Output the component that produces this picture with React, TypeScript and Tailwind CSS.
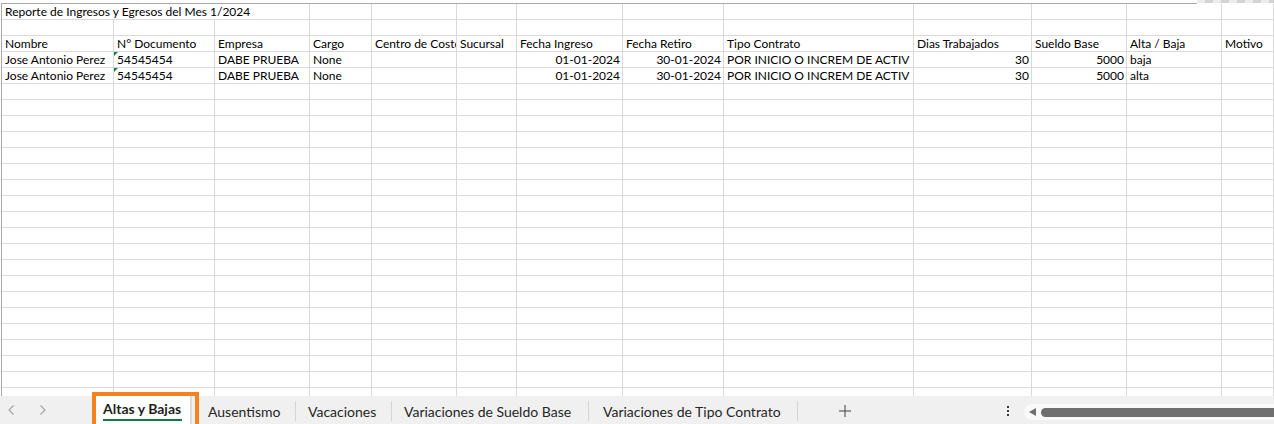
const COLS = [
  "w-[112px]",
  "w-[101px]",
  "w-[95px]",
  "w-[62px]",
  "w-[85px]",
  "w-[60px]",
  "w-[106px]",
  "w-[101px]",
  "w-[190px]",
  "w-[118px]",
  "w-[95px]",
  "w-[95px]",
  "flex-1",
];

type Cell = { t?: string; right?: boolean; flag?: boolean };

const header: Cell[] = [
  "Nombre",
  "N° Documento",
  "Empresa",
  "Cargo",
  "Centro de Costo",
  "Sucursal",
  "Fecha Ingreso",
  "Fecha Retiro",
  "Tipo Contrato",
  "Dias Trabajados",
  "Sueldo Base",
  "Alta / Baja",
  "Motivo",
].map((t) => ({ t }));

function dataRow(tipo: string): Cell[] {
  return [
    { t: "Jose Antonio Perez" },
    { t: "54545454", flag: true },
    { t: "DABE PRUEBA" },
    { t: "None" },
    {},
    {},
    { t: "01-01-2024", right: true },
    { t: "30-01-2024", right: true },
    { t: "POR INICIO O INCREM DE ACTIV" },
    { t: "30", right: true },
    { t: "5000", right: true },
    { t: tipo },
    {},
  ];
}

const rows: Cell[][] = [[], header, dataRow("baja"), dataRow("alta")];
while (rows.length < 24) rows.push([]);

function Row({ cells }: { cells: Cell[] }) {
  return (
    <div className="flex h-[16px] shrink-0 border-b border-[#dadada]">
      {COLS.map((w, i) => {
        const c = cells[i] || {};
        return (
          <div
            key={i}
            className={`${w} relative shrink-0 overflow-hidden whitespace-nowrap border-r border-[#dadada] pl-[3px] leading-[15px] ${
              c.right ? "pr-[2px] text-right" : "pr-[1px]"
            }`}
          >
            {c.flag && (
              <span className="absolute left-0 top-0 h-0 w-0 border-r-[4px] border-t-[4px] border-r-transparent border-t-[#1e7b3a]" />
            )}
            {c.t}
          </div>
        );
      })}
    </div>
  );
}

function TitleRow() {
  return (
    <div className="flex h-[16px] shrink-0 border-b border-[#dadada]">
      {COLS.map((w, i) => (
        <div
          key={i}
          className={`${w} shrink-0 whitespace-nowrap pl-[3px] leading-[15px] ${
            i < 2 ? "" : "border-r border-[#dadada]"
          } ${i === 0 ? "overflow-visible" : "overflow-hidden"}`}
        >
          {i === 0 ? "Reporte de Ingresos y Egresos del Mes 1/2024" : ""}
        </div>
      ))}
    </div>
  );
}

function Sep() {
  return <div className="mt-[5px] h-[20px] w-px shrink-0 bg-[#d4d4d4]" />;
}

export default function App() {
  return (
    <div className="relative h-[424px] w-[1274px] overflow-hidden bg-white font-['Lato',sans-serif] text-[12px] text-black">
      {/* top edge */}
      <div className="flex h-[3px]">
        <div className="flex-1" />
        <div className="flex w-[77px]">
          {Array.from({ length: 10 }).map((_, i) => (
            <div key={i} className={`h-[3px] w-[8px] shrink-0 ${i % 2 ? "bg-[#d3d3d3]" : "bg-[#ececec]"}`} />
          ))}
        </div>
      </div>

      {/* grid */}
      <div className="ml-px mr-[77px] h-px bg-[#a8a8a8]" />
      <div className="ml-px flex h-[392px] flex-col overflow-hidden border-l border-[#a8a8a8]">
        <TitleRow />
        {rows.map((cells, i) => (
          <Row key={i} cells={cells} />
        ))}
      </div>

      {/* sheet tabs */}
      <div className="flex h-[28px] bg-[#f0f0f0] font-['Lato',sans-serif] text-[14px] text-[#262626]">
        <div className="flex w-[94px] shrink-0 items-center">
          <svg className="ml-[8px]" width="6" height="10" viewBox="0 0 6 10" fill="none" stroke="#a3a3a3" strokeWidth="1.1">
            <path d="M5.5 0.5 1 5l4.5 4.5" />
          </svg>
          <svg className="ml-[26px]" width="6" height="10" viewBox="0 0 6 10" fill="none" stroke="#a3a3a3" strokeWidth="1.1">
            <path d="M0.5 0.5 5 5 0.5 9.5" />
          </svg>
        </div>
        <div className="flex w-[96px] shrink-0 flex-col items-start bg-white pl-[9px] pt-[4px]">
          <span className="font-bold leading-[18px] text-[#1f1f1f]">Altas y Bajas</span>
          <span className="mt-[1px] h-[2px] w-[79px] bg-[#107c41]" />
        </div>
        <div className="w-[2px] shrink-0 bg-[#dcdcdc]" />
        <div className="flex w-[103px] shrink-0 items-center pl-[16px] pt-[2px]">Ausentismo</div>
        <Sep />
        <div className="flex w-[95px] shrink-0 items-center pl-[12px] pt-[2px]">Vacaciones</div>
        <Sep />
        <div className="flex w-[196px] shrink-0 items-center pl-[12px] pt-[2px]">Variaciones de Sueldo Base</div>
        <Sep />
        <div className="flex w-[208px] shrink-0 items-center pl-[14px] pt-[2px]">Variaciones de Tipo Contrato</div>
        <Sep />
        <div className="flex w-[70px] shrink-0 items-center pl-[41px] pt-[2px]">
          <svg width="12" height="12" viewBox="0 0 12 12" fill="none" stroke="#404040" strokeWidth="1">
            <path d="M6 0v12M0 6h12" />
          </svg>
        </div>
        <div className="flex-1" />
        <div className="flex w-[267px] shrink-0 items-center">
          <div className="flex w-[3px] flex-col gap-[2px] pt-[2px]">
            <span className="h-[2px] w-[2px] bg-[#3a3a3a]" />
            <span className="h-[2px] w-[2px] bg-[#3a3a3a]" />
            <span className="h-[2px] w-[2px] bg-[#3a3a3a]" />
          </div>
          <div className="ml-[14px] flex h-[16px] flex-1 items-center rounded-l-full bg-[#f9f9f9] pl-[5px] mt-[4px]">
            <svg width="7" height="8" viewBox="0 0 7 8">
              <path d="M7 0v8L0 4z" fill="#6f6f6f" />
            </svg>
            <div className="ml-[5px] h-[9px] flex-1 rounded-l-full bg-[#6f6f6f]" />
          </div>
        </div>
      </div>

      {/* highlight frame around the active sheet */}
      <div className="pointer-events-none absolute left-[92px] top-[392px] h-[40px] w-[107px] border-[4px] border-[#f5821f]" />
    </div>
  );
}
